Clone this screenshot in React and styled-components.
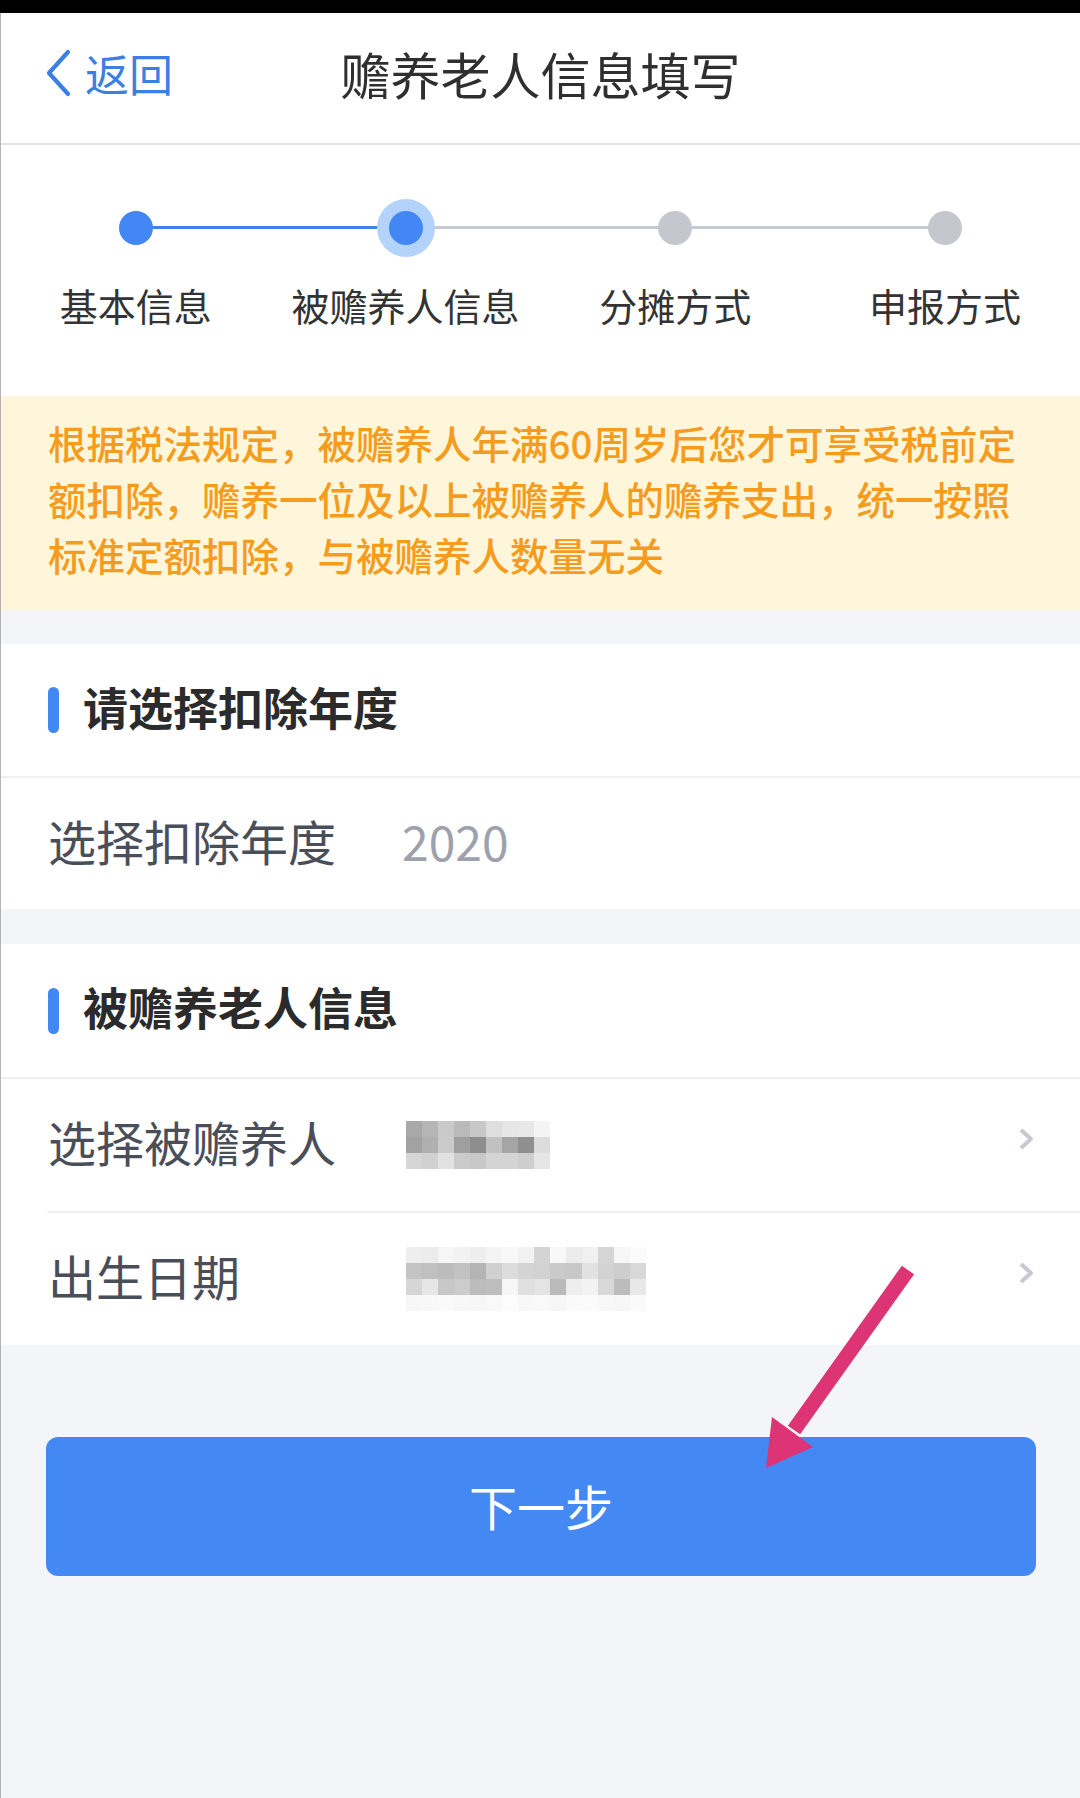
import styled, { createGlobalStyle } from 'styled-components'

const GlobalStyle = createGlobalStyle`
  html, body {
    margin: 0;
    padding: 0;
    background: #f4f5f9;
    font-family: "Noto Sans CJK SC", "Noto Sans", sans-serif;
  }
  * {
    box-sizing: border-box;
  }
`

const BLUE = '#4287f3'

const steps = ['基本信息', '被赡养人信息', '分摊方式', '申报方式']
const CURRENT = 1

const mosaicName = [
  ['#a9a9a9', '#b6b6b6', '#c9c9c9', '#bababa', '#c8c8c8', '#dedede', '#e6e6e6', '#e8e8e8', '#f4f4f4'],
  ['#a2a2a2', '#b0b0b0', '#cbcbcb', '#9f9f9f', '#8e8e8e', '#c1c1c1', '#a5a5a5', '#8f8f8f', '#dcdcdc'],
  ['#d6d6d6', '#d1d1d1', '#e2e2e2', '#cbcbcb', '#c8c8c8', '#d4d4d4', '#d4d4d4', '#cecece', '#e6e6e6'],
]

const mosaicDate = [
  ['#eeeeee', '#ececec', '#f6f6f6', '#f2f2f2', '#eeeeee', '#f4f4f4', '#f8f8f8', '#f2f2f2', '#d4d4d4', '#f8f8f8', '#ececec', '#f0f0f0', '#d6d6d6', '#f6f6f6', '#fbfbfb'],
  ['#c4c4c4', '#c0c0c0', '#bcbcbc', '#c2c2c2', '#b4b4b4', '#d0d0d0', '#dcdcdc', '#d4d4d4', '#d2d2d2', '#cacaca', '#c8c8c8', '#e2e2e2', '#d2d2d2', '#cecece', '#d8d8d8'],
  ['#d6d6d6', '#e6e6e6', '#c8c8c8', '#cccccc', '#bcbcbc', '#bebebe', '#f6f6f6', '#e0e0e0', '#e4e4e4', '#bababa', '#eeeeee', '#f2f2f2', '#d8d8d8', '#bcbcbc', '#e8e8e8'],
  ['#f7f7f7', '#f8f8f8', '#fafafa', '#f8f8f8', '#f7f7f7', '#f9f9f9', '#fcfcfc', '#f8f8f8', '#f9f9f9', '#f6f6f6', '#fafafa', '#fbfbfb', '#f8f8f8', '#f6f6f6', '#fafafa'],
]

const Page = styled.div`
  position: relative;
  min-height: 1798px;
  background: #f4f5f9;
  overflow: hidden;
`

const StatusBar = styled.div`
  height: 13px;
  background: #000;
`

const Body = styled.div`
  border-left: 1px solid #b4b4b8;
  min-height: 1785px;
`

const Header = styled.header`
  display: grid;
  grid-template-columns: 1fr auto 1fr;
  align-items: center;
  height: 132px;
  padding-bottom: 10px;
  background: #fff;
  border-bottom: 2px solid #e3e4e8;
`

const BackButton = styled.button`
  justify-self: start;
  display: flex;
  align-items: center;
  gap: 12px;
  margin-left: 44px;
  padding: 0;
  border: none;
  background: none;
  color: #3c7fe4;
  font-family: inherit;
  font-size: 44px;
  line-height: 1;
`

const Title = styled.h1`
  margin: 0;
  font-size: 50px;
  font-weight: 400;
  color: #2f2f2f;
  line-height: 1;
`

const Steps = styled.div`
  display: grid;
  grid-template-columns: repeat(4, 1fr);
  height: 251px;
  padding-top: 54px;
  background: #fff;
`

const Step = styled.div`
  display: flex;
  flex-direction: column;
  align-items: center;
`

const DotTrack = styled.div`
  position: relative;
  display: flex;
  align-items: center;
  justify-content: center;
  width: 100%;
  height: 58px;

  &::before,
  &::after {
    content: '';
    position: absolute;
    top: 27px;
    height: 3px;
    width: 50%;
  }

  &::before {
    left: 0;
    background: ${(p) => (p.$first ? 'transparent' : p.$leftOn ? '#3d82ef' : '#c9cad1')};
  }

  &::after {
    right: 0;
    background: ${(p) => (p.$last ? 'transparent' : p.$rightOn ? '#3d82ef' : '#c9cad1')};
  }
`

const Dot = styled.span`
  position: relative;
  z-index: 1;
  width: 34px;
  height: 34px;
  border-radius: 50%;
  background: ${(p) => (p.$on ? BLUE : '#c5c7cf')};
  box-shadow: ${(p) => (p.$current ? '0 0 0 12px #b3d3fa' : 'none')};
`

const StepLabel = styled.span`
  margin-top: 29px;
  font-size: 38px;
  line-height: 1;
  color: #333;
  white-space: nowrap;
`

const Notice = styled.p`
  margin: 0;
  padding: 18px 47px 28px;
  background: #fef6da;
  color: #f59c1e;
  font-size: 38.5px;
  font-weight: 500;
  line-height: 56px;
`

const Section = styled.section`
  margin-top: ${(p) => p.$gap}px;
  background: #fff;
`

const SectionHead = styled.div`
  display: flex;
  align-items: center;
  gap: 24px;
  height: ${(p) => p.$height}px;
  padding-left: 47px;
  border-bottom: 2px solid #eeeff2;
`

const Bar = styled.span`
  width: 11px;
  height: 46px;
  border-radius: 6px;
  background: ${BLUE};
`

const SectionTitle = styled.h2`
  margin: 0;
  padding-bottom: 8px;
  font-size: 45px;
  font-weight: 700;
  color: #2b2b2b;
  line-height: 1;
`

const Row = styled.div`
  display: flex;
  align-items: center;
  height: ${(p) => p.$height}px;
  margin-left: ${(p) => (p.$inset ? 46 : 0)}px;
  padding-left: ${(p) => (p.$inset ? 1 : 47)}px;
  padding-right: 46px;
  border-bottom: ${(p) => (p.$divider ? '2px solid #eeeff2' : 'none')};
`

const Label = styled.span`
  flex: 0 0 354px;
  padding-bottom: 8px;
  font-size: 48px;
  line-height: 1;
  color: #4a4e58;
`

const Value = styled.span`
  flex: 1;
  display: flex;
  align-items: center;
  padding-bottom: ${(p) => (p.$text ? 8 : 0)}px;
  padding-left: ${(p) => p.$shift || 0}px;
  font-size: 48px;
  line-height: 1;
  color: #9da1ab;
`

const Chevron = styled.svg`
  flex: 0 0 auto;
  margin-top: -12px;
`

const Footer = styled.div`
  padding: 92px 44px 0 45px;
`

const NextButton = styled.button`
  display: flex;
  align-items: center;
  justify-content: center;
  width: 100%;
  height: 139px;
  padding: 0 0 4px;
  border: none;
  border-radius: 12px;
  background: #4489f3;
  color: #fff;
  font-family: inherit;
  font-size: 48px;
  line-height: 1;
`

const Arrow = styled.svg`
  position: absolute;
  left: 760px;
  top: 1260px;
  pointer-events: none;
`

function Mosaic({ cells }) {
  const cols = cells[0].length
  return (
    <svg width={cols * 16} height={cells.length * 16} viewBox={`0 0 ${cols * 16} ${cells.length * 16}`}>
      {cells.map((row, r) =>
        row.map((c, i) => <rect key={`${r}-${i}`} x={i * 16} y={r * 16} width="16.5" height="16.5" fill={c} />)
      )}
    </svg>
  )
}

function RowChevron() {
  return (
    <Chevron width="16" height="24" viewBox="0 0 16 24">
      <polyline points="3,3 13,12 3,21" fill="none" stroke="#c7c9d1" strokeWidth="4" strokeLinejoin="round" />
    </Chevron>
  )
}

export default function App() {
  return (
    <Page>
      <GlobalStyle />
      <StatusBar />
      <Body>
        <Header>
          <BackButton>
            <svg width="28" height="48" viewBox="0 0 28 48">
              <polyline points="23,3 4,24 23,45" fill="none" stroke="#3c7fe4" strokeWidth="4.2" strokeLinecap="round" strokeLinejoin="round" />
            </svg>
            返回
          </BackButton>
          <Title>赡养老人信息填写</Title>
          <span />
        </Header>

        <Steps>
          {steps.map((s, i) => (
            <Step key={s}>
              <DotTrack
                $first={i === 0}
                $last={i === steps.length - 1}
                $leftOn={i <= CURRENT}
                $rightOn={i < CURRENT}
              >
                <Dot $on={i <= CURRENT} $current={i === CURRENT} />
              </DotTrack>
              <StepLabel>{s}</StepLabel>
            </Step>
          ))}
        </Steps>

        <Notice>
          根据税法规定，被赡养人年满60周岁后您才可享受税前定额扣除，赡养一位及以上被赡养人的赡养支出，统一按照标准定额扣除，与被赡养人数量无关
        </Notice>

        <Section $gap={34}>
          <SectionHead $height={134}>
            <Bar />
            <SectionTitle>请选择扣除年度</SectionTitle>
          </SectionHead>
          <Row $height={131}>
            <Label>选择扣除年度</Label>
            <Value $text>2020</Value>
          </Row>
        </Section>

        <Section $gap={35}>
          <SectionHead $height={135}>
            <Bar />
            <SectionTitle>被赡养老人信息</SectionTitle>
          </SectionHead>
          <Row $height={134} $inset $divider>
            <Label>选择被赡养人</Label>
            <Value $shift={4}>
              <Mosaic cells={mosaicName} />
            </Value>
            <RowChevron />
          </Row>
          <Row $height={132}>
            <Label>出生日期</Label>
            <Value $shift={4}>
              <Mosaic cells={mosaicDate} />
            </Value>
            <RowChevron />
          </Row>
        </Section>

        <Footer>
          <NextButton>下一步</NextButton>
        </Footer>
      </Body>

      <Arrow width="160" height="215" viewBox="0 0 160 215">
        <line x1="148" y1="10" x2="34" y2="170" stroke="#dc3474" strokeWidth="15" />
        <polygon points="6,208 12,157 53,187" fill="#dc3474" />
      </Arrow>
    </Page>
  )
}
